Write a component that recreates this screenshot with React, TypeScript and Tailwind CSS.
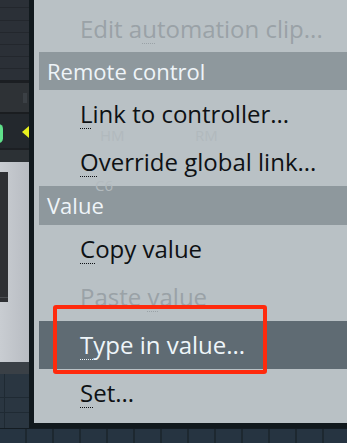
import React from "react";

type ItemProps = {
  pre?: string;
  mn: string;
  post: string;
  disabled?: boolean;
  selected?: boolean;
  first?: boolean;
};

function MenuItem({ pre = "", mn, post, disabled, selected, first }: ItemProps) {
  const color = disabled
    ? "text-[#9aa2a7]"
    : selected
    ? "text-[#eef5f9]"
    : "text-[#0e1114]";
  return (
    <div
      className={`${first ? "h-[52px] pt-[5px]" : "h-[48px]"} ${
        selected ? "bg-[#5f6b73] ml-[5px] pl-[41px]" : "pl-[46px]"
      } ${color} text-[24px] leading-[48px] whitespace-nowrap`}
    >
      {pre}
      <span className="underline decoration-dotted decoration-1 underline-offset-[5px]">{mn}</span>
      {post}
    </div>
  );
}

function Header({ label, h }: { label: string; h: string }) {
  return (
    <div
      className={`${h} ml-[5px] bg-[#8e989d] pl-[8px] flex items-center text-[22px] text-[#eef4f8] whitespace-nowrap`}
    >
      {label}
    </div>
  );
}

function LeftStrip() {
  return (
    <div className="w-[29px] h-[428px] flex flex-col shrink-0">
      {/* grid rows */}
      <div className="h-[80px] bg-[#2b3037] flex flex-col">
        <div className="h-[8px] border-b border-[#23272d]" />
        <div className="h-[13px] border-b border-[#23272d]" />
        <div className="h-[12px] border-b border-[#23272d]" />
        <div className="h-[12px] border-b border-[#23272d]" />
        <div className="h-[12px] border-b border-[#23272d]" />
        <div className="h-[12px] border-b border-[#23272d]" />
      </div>
      <div className="h-[3px] bg-[#1b1e22]" />
      <div className="h-[29px] bg-[#2e3236] relative">
        <div className="absolute left-[23px] top-[10px] w-[4px] h-[10px] bg-[#3b4045]" />
      </div>
      <div className="h-[2px] bg-[#1a1d20]" />
      <div className="h-[34px] bg-[#23282d] relative">
        <div className="absolute left-[-6px] top-[10px] w-[9px] h-[19px] rounded-full bg-[#5fe08a]" />
        <svg className="absolute left-[22px] top-[12px]" width="7" height="12" viewBox="0 0 7 12">
          <polygon points="0,6 7,0 7,12" fill="#e6f01e" />
        </svg>
      </div>
      <div className="h-[2px] bg-[#1c1f23]" />
      <div className="h-[12px] bg-[#2c3135]" />
      <div className="h-[200px] bg-gradient-to-r from-[#c9cdd2] to-[#b8bcc2] relative">
        <div className="absolute left-0 top-[10px] w-[8px] h-[130px] bg-[#2e3034]">
          <div className="absolute bottom-[4px] left-0 w-full h-px bg-[#4a4d52]" />
        </div>
      </div>
      <div className="h-[12px] bg-[#3a4046]" />
      <div className="flex-1 bg-[#2a3641] relative">
        <div className="absolute left-[4px] top-0 bottom-0 w-px bg-[#1f2a33]" />
        <div className="absolute left-0 right-0 top-[23px] h-px bg-[#1f2a33]" />
        <div className="absolute left-0 right-0 top-[38px] h-px bg-[#1f2a33]" />
      </div>
    </div>
  );
}

export default function App() {
  const cells = Array.from({ length: 13 });
  return (
    <div className="w-[347px] h-[443px] overflow-hidden bg-[#2a3641] font-['Open_Sans',sans-serif] flex flex-col">
      <div className="flex h-[428px]">
        <LeftStrip />
        <div className="relative flex-1 h-[428px] bg-[#b9c1c5] border-l-[5px] border-b-[5px] border-[#11191d] overflow-hidden flex flex-col">
          {/* faint ghost of what lies under the menu */}
          <div className="absolute left-[66px] top-[128px] text-[15px] leading-none text-[#b1b9bd]">HM</div>
          <div className="absolute left-[161px] top-[128px] text-[15px] leading-none text-[#b1b9bd]">RM</div>
          <div className="absolute left-[61px] top-[178px] text-[15px] leading-none text-[#b3bbbf]">C6</div>

          <MenuItem first disabled pre="Edit a" mn="u" post="tomation clip..." />
          <Header label="Remote control" h="h-[38px]" />
          <MenuItem mn="L" post="ink to controller..." />
          <MenuItem mn="O" post="verride global link..." />
          <Header label="Value" h="h-[39px]" />
          <MenuItem mn="C" post="opy value" />
          <MenuItem disabled pre="Paste " mn="v" post="alue" />
          <MenuItem selected mn="T" post="ype in value..." />
          <MenuItem mn="S" post="et..." />

          {/* red highlight box */}
          <div className="absolute left-[19px] top-[305px] w-[214px] h-[69px] border-[4px] border-[#ff2a0d] rounded-[3px]" />
        </div>
      </div>
      <div className="h-[15px] flex border-t border-[#141c22]">
        {cells.map((_, i) => (
          <div key={i} className="w-[27px] shrink-0 border-r-2 border-[#1d2830] bg-[#263441]" />
        ))}
      </div>
    </div>
  );
}
